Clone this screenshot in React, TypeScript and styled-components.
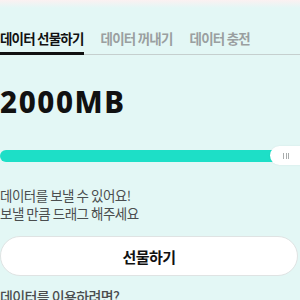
import styled, { createGlobalStyle } from 'styled-components';

const Colors = {
	mint: '#e3f7f5',
	teal: '#1ddfc7',
	black: '#111111',
	gray: '#9a9fa0',
	text: '#4a4d4e',
	line: '#c5cfce',
	white: '#ffffff',
};

const GlobalStyle = createGlobalStyle`
	body {
		margin: 0;
		background: ${Colors.mint};
		font-family: 'Noto Sans CJK KR', 'Noto Sans', sans-serif;
	}
`;

const tabs = ['데이터 선물하기', '데이터 꺼내기', '데이터 충전'];

export default function App() {
	return (
		<Page>
			<GlobalStyle />
			<TopFade />
			<Tabs>
				{tabs.map((label, i) => (
					<Tab key={label} $active={i === 0}>
						{label}
					</Tab>
				))}
			</Tabs>
			<Amount>2000MB</Amount>
			<Slider>
				<Track />
				<Thumb>
					<Grip />
					<Grip />
					<Grip />
				</Thumb>
			</Slider>
			<Guide>
				데이터를 보낼 수 있어요!
				<br />
				보낼 만큼 드래그 해주세요
			</Guide>
			<GiftButton>선물하기</GiftButton>
			<Help>데이터를 이용하려면?</Help>
		</Page>
	);
}

const Page = styled.div`
	width: 300px;
	height: 300px;
	overflow: hidden;
	background: ${Colors.mint};
`;

const TopFade = styled.div`
	height: 8px;
	background: linear-gradient(#fbf1f1, ${Colors.mint});
`;

const Tabs = styled.div`
	display: flex;
	gap: 17px;
	padding-top: 20px;
	border-bottom: 1px solid ${Colors.line};
`;

const Tab = styled.div<{ $active: boolean }>`
	font-size: 13.5px;
	line-height: 20px;
	letter-spacing: -0.8px;
	font-weight: 700;
	color: ${({ $active }) => ($active ? Colors.black : Colors.gray)};
	padding-bottom: 4px;
	border-bottom: 3px solid ${({ $active }) => ($active ? Colors.black : 'transparent')};
	margin-bottom: -1px;
	white-space: nowrap;
`;

const Amount = styled.div`
	margin-top: 32px;
	font-family: 'Noto Sans', sans-serif;
	font-size: 29.5px;
	line-height: 30px;
	font-weight: 800;
	letter-spacing: 1.6px;
	color: ${Colors.black};
`;

const Slider = styled.div`
	position: relative;
	height: 17px;
	margin-top: 30px;
	display: flex;
	align-items: center;
`;

const Track = styled.div`
	width: 278px;
	height: 12px;
	border-radius: 6px;
	background: ${Colors.teal};
`;

const Thumb = styled.div`
	position: absolute;
	left: 270px;
	top: -1px;
	width: 40px;
	height: 19px;
	border-radius: 10px;
	background: ${Colors.white};
	box-shadow: 0 0 2px rgba(0, 0, 0, 0.08);
	display: flex;
	align-items: center;
	gap: 1.5px;
	padding-left: 13px;
	box-sizing: border-box;
`;

const Grip = styled.span`
	width: 1px;
	height: 6px;
	background: #a8acac;
`;

const Guide = styled.p`
	margin: 22px 0 0;
	font-size: 13.5px;
	line-height: 18px;
	letter-spacing: -0.5px;
	color: ${Colors.text};
`;

const GiftButton = styled.button`
	display: block;
	margin-top: 14px;
	width: 298px;
	height: 40px;
	border: 1px solid #dfe3e3;
	border-radius: 20px;
	background: ${Colors.white};
	font-family: 'Noto Sans CJK KR', 'Noto Sans', sans-serif;
	font-size: 15px;
	font-weight: 700;
	letter-spacing: -0.5px;
	color: ${Colors.black};
`;

const Help = styled.p`
	margin: 10px 0 0;
	font-size: 14px;
	line-height: 20px;
	letter-spacing: -0.6px;
	font-weight: 500;
	color: ${Colors.text};
`;
